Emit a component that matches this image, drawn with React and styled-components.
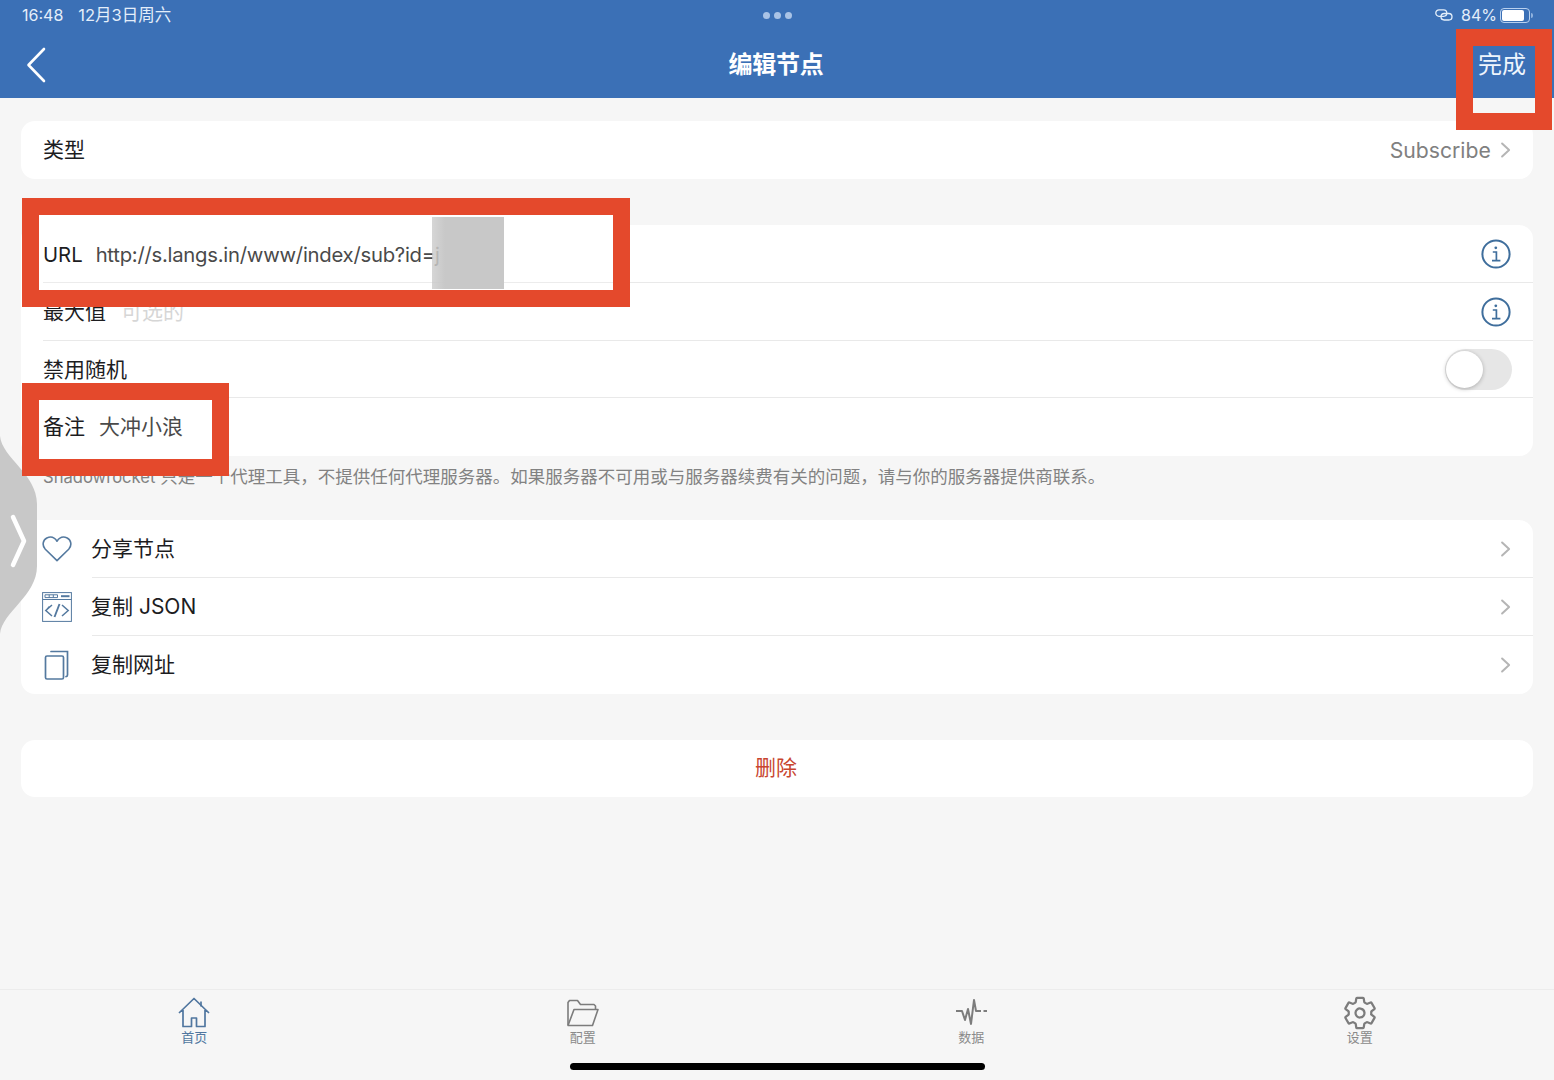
import styled, { createGlobalStyle } from "styled-components";
import { IoSettingsOutline } from "react-icons/io5";

const GlobalStyle = createGlobalStyle`
  html, body {
    margin: 0;
    padding: 0;
    background: #f6f6f6;
    font-family: "Inter", "Noto Sans CJK SC", sans-serif;
  }
`;

const Page = styled.div`
  position: relative;
  width: 1554px;
  height: 1080px;
  overflow: hidden;
  display: flex;
  flex-direction: column;
  background: #f6f6f6;
`;

const Header = styled.header`
  height: 98px;
  flex: none;
  background: #3b70b6;
  color: #fff;
  display: flex;
  flex-direction: column;
`;

const StatusBar = styled.div`
  height: 30px;
  padding: 0 21px 0 22px;
  display: grid;
  grid-template-columns: 1fr auto 1fr;
  align-items: center;
  font-size: 16px;
  color: #e4eefa;
`;

const StatusLeft = styled.div`
  display: flex;
  align-items: center;
  gap: 15px;
`;

const DateText = styled.span`
  font-size: 16.5px;
  margin-bottom: 2px;
`;

const Dots = styled.div`
  display: flex;
  gap: 4px;
`;

const Dot = styled.span`
  width: 7px;
  height: 7px;
  border-radius: 50%;
  background: #a9c3e6;
`;

const StatusRight = styled.div`
  display: flex;
  justify-content: flex-end;
  align-items: center;
  gap: 3px;

  & > svg {
    margin-right: 5px;
  }
`;

const Battery = styled.div`
  position: relative;
  width: 30px;
  height: 15px;
  box-sizing: border-box;
  border: 1px solid #b9d1ef;
  border-radius: 4px;
  padding: 1px;
  margin-right: 3px;

  &::before {
    content: "";
    display: block;
    width: 84%;
    height: 100%;
    background: #fff;
    border-radius: 2px;
  }

  &::after {
    content: "";
    position: absolute;
    right: -4px;
    top: 4px;
    width: 2px;
    height: 5px;
    border-radius: 0 2px 2px 0;
    background: #8fb2de;
  }
`;

const NavBar = styled.div`
  height: 68px;
  margin-top: -1px;
  padding: 0 28px 0 26px;
  display: grid;
  grid-template-columns: 1fr auto 1fr;
  align-items: center;

  & > svg {
    margin-top: 3px;
  }
`;

const Title = styled.h1`
  margin: 0 0 2px;
  font-size: 24px;
  font-weight: 700;
  letter-spacing: -0.2px;
`;

const Done = styled.div`
  justify-self: end;
  margin-bottom: 2px;
  font-size: 24px;
  color: #eef5fd;
`;

const Main = styled.main`
  flex: 1;
  padding: 23px 21px 0;
  display: flex;
  flex-direction: column;
`;

const Card = styled.section`
  background: #fff;
  border-radius: 14px;
  margin-bottom: ${(p) => p.$after || 0}px;
`;

const Row = styled.div`
  height: ${(p) => p.$h || 58}px;
  box-sizing: border-box;
  padding-right: 22px;
  padding-left: 22px;
  display: flex;
  align-items: center;
  font-size: 21px;
  color: #1d1d1f;
  position: relative;

  &:not(:last-child)::after {
    content: "";
    position: absolute;
    right: 0;
    bottom: 0;
    left: ${(p) => p.$inset || 22}px;
    height: 1px;
    background: #e9e9e9;
  }
`;

const Label = styled.span`
  flex: none;
  margin-bottom: ${(p) => (p.$latin ? 0 : 4)}px;
  font-size: ${(p) => (p.$latin ? 20.3 : 21)}px;
  ${(p) => p.$raised && "position: relative; z-index: 2;"}
`;

const Value = styled.span`
  margin-left: ${(p) => p.$gap || 15}px;
  margin-bottom: ${(p) => (p.$latin ? 0 : 4)}px;
  font-size: ${(p) => (p.$latin ? 20.3 : 21)}px;
  letter-spacing: ${(p) => (p.$latin ? -0.25 : 0)}px;
  color: ${(p) => (p.$muted ? "#d6d6d6" : "#4a4a4a")};
  ${(p) => p.$raised && "position: relative; z-index: 2;"}
`;

const Trailing = styled.div`
  margin-left: auto;
  display: flex;
  align-items: center;
  gap: 9px;
  color: #808080;
  font-size: 21.2px;
`;

const Toggle = styled.div`
  width: 67px;
  height: 41px;
  margin-right: -1px;
  border-radius: 21px;
  background: #e6e6e6;
  position: relative;

  &::before {
    content: "";
    position: absolute;
    top: 2px;
    left: 1px;
    width: 37px;
    height: 37px;
    border-radius: 50%;
    background: #fff;
    box-shadow: 0 1px 4px rgba(0, 0, 0, 0.25);
  }
`;

const Footnote = styled.p`
  margin: 0 0 33px;
  height: 31px;
  padding: 9px 0 0 22px;
  box-sizing: border-box;
  font-size: 17.5px;
  line-height: 24px;
  color: #828282;
  white-space: nowrap;
`;

const AppName = styled.span`
  font-size: 16.6px;
`;

const IconBox = styled.span`
  width: 30px;
  flex: none;
  margin-right: 19px;
  margin-left: -1px;
  display: flex;
  justify-content: center;
  color: #54799f;
`;

const Danger = styled.div`
  width: 100%;
  margin-bottom: 6px;
  padding-right: 2px;
  text-align: center;
  color: #c8452f;
`;

const TabBar = styled.nav`
  height: 91px;
  flex: none;
  box-sizing: border-box;
  border-top: 1px solid #ececec;
  padding-top: 6px;
  display: grid;
  grid-template-columns: repeat(4, 1fr);
  align-items: start;
`;

const Tab = styled.div`
  display: flex;
  flex-direction: column;
  align-items: center;
  color: ${(p) => (p.$active ? "#50769f" : "#8a8a8a")};
  font-size: 13px;
  line-height: 17px;
`;

const TabIcon = styled.span`
  height: 33px;
  display: flex;
  align-items: center;
  justify-content: center;
  color: ${(p) => (p.$active ? "#50769f" : "#7c7c7c")};
`;

const HomeIndicator = styled.div`
  position: absolute;
  left: 570px;
  top: 1063px;
  width: 415px;
  height: 7px;
  border-radius: 4px;
  background: #000;
`;

const Mark = styled.div`
  position: absolute;
  box-sizing: border-box;
  border: 17px solid #e4492c;
  z-index: 1;
`;

const DoneMark = styled(Mark)`
  left: 1456px;
  top: 29px;
  width: 96px;
  height: 101px;
`;

const UrlMark = styled(Mark)`
  left: 22px;
  top: 198px;
  width: 608px;
  height: 109px;
  background: #fff;

  &::after {
    content: "";
    position: absolute;
    left: 4px;
    right: 0;
    top: 67px;
    height: 1px;
    background: #ececec;
  }
`;

const NoteMark = styled(Mark)`
  left: 22px;
  top: 383px;
  width: 207px;
  height: 93px;
  background: #fff;
`;

const Redaction = styled.div`
  position: absolute;
  left: 432px;
  top: 217px;
  width: 72px;
  height: 72px;
  z-index: 3;
  background: linear-gradient(90deg, rgba(200, 200, 200, 0.75), #c8c8c8 18%);
`;

const HandleArt = styled.svg`
  position: absolute;
  left: 0;
  top: 436px;
`;

const Chevron = ({ size = 16, color = "#b5b5b5" }) => (
  <svg width={size * 0.7} height={size} viewBox="0 0 11 16" fill="none">
    <path d="M2 1.5 9 8 2 14.5" stroke={color} strokeWidth="2" strokeLinecap="round" strokeLinejoin="round" />
  </svg>
);

const InfoIcon = () => (
  <svg width="30" height="30" viewBox="0 0 30 30" fill="none" stroke="#3f6e9c" strokeWidth="2">
    <circle cx="15" cy="15" r="13.6" />
    <path d="M11.8 13h3.6v8.4M11 21.6h8.4" strokeWidth="1.7" />
    <circle cx="14.8" cy="8.8" r="1.4" fill="#3f6e9c" stroke="none" />
  </svg>
);

const HeartIcon = () => (
  <svg width="30" height="26" viewBox="0 0 30 26" fill="none" stroke="currentColor" strokeWidth="1.6">
    <path d="M15 24.6 3.3 13.2C-.2 9.5.8 4 4.8 2 8.6.2 12.6 1.5 15 5.2 17.4 1.5 21.4.2 25.2 2c4 2 5 7.5 1.5 11.2z" strokeLinejoin="round" />
  </svg>
);

const CodeIcon = () => (
  <svg width="30" height="30" viewBox="0 0 30 30" fill="none" stroke="currentColor">
    <rect x=".6" y=".6" width="28.8" height="28.8" strokeWidth="1" />
    <path d="M.6 7.5h28.8" strokeWidth="1" />
    <path d="M3 2.8h12.5v2.8H3zM7.2 2.8v2.8M11.3 2.8v2.8" strokeWidth="1" />
    <path d="M19 4.2h8.5" strokeWidth="2" />
    <path d="M10 13 3.800 18.500 10 24M7.500 14.500 4 18.500" strokeWidth="1.5" />
    <path d="M20 13l6.200 5.500L20 24" strokeWidth="1.5" />
    <path d="M17.500 12l-5 13" strokeWidth="1.9" />
  </svg>
);

const CopyIcon = () => (
  <svg width="26" height="30" viewBox="0 0 26 30" fill="none" stroke="currentColor" strokeWidth="1.7">
    <rect x="1.5" y="6" width="18" height="23" rx="1.5" />
    <path d="M7 1.500h16.500v23.500c0 1-.5 1.600-1.500 1.600" strokeLinecap="round" />
  </svg>
);

const HomeIcon = () => (
  <svg width="32" height="32" viewBox="0 0 32 32" fill="none" stroke="currentColor" strokeWidth="1.7">
    <path d="M1 16 16 1.500 31 16M5 13v16.500h8.500V21h5v8.500H27V13" strokeLinejoin="round" />
    <path d="M23 4.500v5" />
  </svg>
);

const FolderIcon = () => (
  <svg width="33" height="28" viewBox="0 0 33 28" fill="none" stroke="currentColor" strokeWidth="1.6">
    <path d="M2 26V3.500L3.500 1.500h8l3 4h13.500l1.500 1.500v3.500" strokeLinejoin="round" />
    <path d="M2 26.500 8 10.500h24l-5.500 16z" strokeLinejoin="round" />
  </svg>
);

const PulseIcon = () => (
  <svg width="33" height="28" viewBox="0 0 33 28" fill="none" stroke="currentColor" strokeWidth="2">
    <path d="M1 12h6l3 9 3-11 3 15 3-24 2 11h5" strokeLinejoin="round" />
    <path d="M28.500 12h3.500" />
  </svg>
);

const LinkIcon = () => (
  <svg width="18" height="12" viewBox="0 0 18 12" fill="none" stroke="#e4eefa" strokeWidth="1.3">
    <rect x=".8" y=".8" width="11" height="6.5" rx="3.2" />
    <rect x="6" y="4.500" width="11" height="6.5" rx="3.2" />
  </svg>
);

const Handle = () => (
  <HandleArt width="38" height="198" viewBox="0 0 38 198">
    <path d="M0 0C2 22 37 38 37 68v62C37 160 2 176 0 198z" fill="#c8c8c8" />
    <path d="M13 81 24 105 13 129" fill="none" stroke="#fff" strokeWidth="4.5" strokeLinecap="round" strokeLinejoin="round" />
  </HandleArt>
);

const tabs = [
  { name: "首页", icon: <HomeIcon />, active: true },
  { name: "配置", icon: <FolderIcon /> },
  { name: "数据", icon: <PulseIcon /> },
  { name: "设置", icon: <IoSettingsOutline size={36} /> },
];

const actions = [
  { name: "分享节点", icon: <HeartIcon /> },
  { name: "复制 JSON", icon: <CodeIcon /> },
  { name: "复制网址", icon: <CopyIcon /> },
];

export default function App() {
  return (
    <Page>
      <GlobalStyle />
      <Header>
        <StatusBar>
          <StatusLeft>
            <span>16:48</span>
            <DateText>12月3日周六</DateText>
          </StatusLeft>
          <Dots>
            <Dot />
            <Dot />
            <Dot />
          </Dots>
          <StatusRight>
            <LinkIcon />
            <span>84%</span>
            <Battery />
          </StatusRight>
        </StatusBar>
        <NavBar>
          <svg width="20" height="36" viewBox="0 0 20 36" fill="none">
            <path d="M18 2 2.500 18 18 34" stroke="#fff" strokeWidth="2.6" strokeLinecap="round" strokeLinejoin="round" />
          </svg>
          <Title>编辑节点</Title>
          <Done>完成</Done>
        </NavBar>
      </Header>

      <Main>
        <Card $after={46}>
          <Row>
            <Label>类型</Label>
            <Trailing>
              Subscribe
              <Chevron />
            </Trailing>
          </Row>
        </Card>

        <Card>
          <Row>
            <Label $raised $latin>URL</Label>
            <Value $raised $latin $gap={13}>http://s.langs.in/www/index/sub?id=j</Value>
            <Trailing>
              <InfoIcon />
            </Trailing>
          </Row>
          <Row>
            <Label>最大值</Label>
            <Value $muted>可选的</Value>
            <Trailing>
              <InfoIcon />
            </Trailing>
          </Row>
          <Row $h={57}>
            <Label>禁用随机</Label>
            <Trailing>
              <Toggle />
            </Trailing>
          </Row>
          <Row>
            <Label $raised>备注</Label>
            <Value $raised $gap={14}>大冲小浪</Value>
          </Row>
        </Card>
        <Footnote>
          <AppName>Shadowrocket</AppName> 只是一个代理工具，不提供任何代理服务器。如果服务器不可用或与服务器续费有关的问题，请与你的服务器提供商联系。
        </Footnote>

        <Card $after={46}>
          {actions.map((action) => (
            <Row key={action.name} $inset={71}>
              <IconBox>{action.icon}</IconBox>
              <Label>{action.name}</Label>
              <Trailing>
                <Chevron />
              </Trailing>
            </Row>
          ))}
        </Card>

        <Card>
          <Row $h={57}>
            <Danger>删除</Danger>
          </Row>
        </Card>
      </Main>

      <TabBar>
        {tabs.map((tab) => (
          <Tab key={tab.name} $active={tab.active}>
            <TabIcon $active={tab.active}>{tab.icon}</TabIcon>
            {tab.name}
          </Tab>
        ))}
      </TabBar>

      <Handle />
      <DoneMark />
      <UrlMark />
      <NoteMark />
      <Redaction />
      <HomeIndicator />
    </Page>
  );
}
